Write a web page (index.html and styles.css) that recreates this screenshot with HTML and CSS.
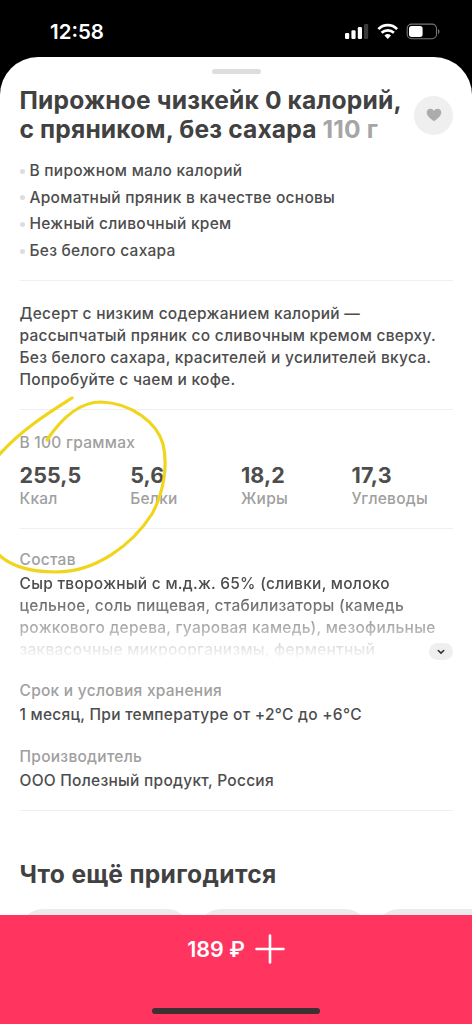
FILE: index.html
```html
<!DOCTYPE html>
<html lang="ru">
<head>
<meta charset="utf-8">
<title>Пирожное чизкейк</title>
<link rel="stylesheet" href="styles.css">
</head>
<body>
<div class="screen">
  <header class="status">
    <span class="time">12:58</span>
    <svg class="indicators" width="97" height="18" viewBox="0 0 97 18">
      <g fill="#fff">
        <rect x="1" y="10" width="4.2" height="6" rx="1.2"/>
        <rect x="7.4" y="7.2" width="4.2" height="8.8" rx="1.2"/>
        <rect x="13.8" y="4" width="4.2" height="12" rx="1.2"/>
        <rect x="20" y="1" width="4.2" height="15" rx="1.2" fill="#3a3a3a"/>
      </g>
      <g fill="none" stroke="#fff" stroke-width="2.7">
        <path d="M34.4 6.1a13.2 13.2 0 0 1 18.7 0"/>
        <path d="M37.6 9.8a8.8 8.8 0 0 1 12.3 0"/>
      </g>
      <path d="M43.75 15.9l-3.3-3.4a5 5 0 0 1 6.6 0z" fill="#fff"/>
      <rect x="63.2" y="1.1" width="29.3" height="14.6" rx="4.4" fill="none" stroke="#777" stroke-width="1.1"/>
      <rect x="65" y="2.9" width="13.6" height="11" rx="2.6" fill="#fff"/>
      <path d="M94 6v5c1.9-.7 1.9-4.3 0-5z" fill="#777"/>
    </svg>
  </header>

  <main class="sheet">
    <div class="grabber"></div>
    <div class="head">
      <h1 class="title">Пирожное чизкейк 0 калорий,<br>с пряником, без сахара <span class="weight">110 г</span></h1>
      <button class="like" aria-label="В избранное">
        <svg width="16" height="14" viewBox="0 0 16 14"><path d="M8 13.2C5.8 11.7.7 8.400.7 4.600.7 2.300 2.300.8 4.300.8 5.900.8 7.300 1.600 8 3 8.700 1.600 10.100.8 11.700.8c2 0 3.600 1.500 3.600 3.800 0 3.800-5.100 7.100-7.300 8.600z" fill="#acacac"/></svg>
      </button>
    </div>
    <ul class="features">
      <li>В пирожном мало калорий</li>
      <li>Ароматный пряник в качестве основы</li>
      <li>Нежный сливочный крем</li>
      <li>Без белого сахара</li>
    </ul>
    <p class="description">Десерт с низким содержанием калорий —<br>рассыпчатый пряник со сливочным кремом сверху.<br>Без белого сахара, красителей и усилителей вкуса.<br>Попробуйте с чаем и кофе.</p>
    <section class="nutrition">
      <div class="label">В 100 граммах</div>
      <div class="facts">
        <div><b>255,5</b><span>Ккал</span></div>
        <div><b>5,6</b><span>Белки</span></div>
        <div><b>18,2</b><span>Жиры</span></div>
        <div><b>17,3</b><span>Углеводы</span></div>
      </div>
    </section>
    <section class="details">
      <div class="label">Состав</div>
      <div class="composition">
        <p class="faded">Сыр творожный с м.д.ж. 65% (сливки, молоко<br>цельное, соль пищевая, стабилизаторы (камедь<br>рожкового дерева, гуаровая камедь), мезофильные<br>заквасочные микроорганизмы, ферментный</p>
        <button class="more" aria-label="Показать полностью"><svg width="8" height="6" viewBox="0 0 8 6"><path d="M1.300 1.500L4 4.100l2.700-2.600" fill="none" stroke="#333" stroke-width="1.600" stroke-linecap="round" stroke-linejoin="round"/></svg></button>
      </div>
      <div class="label storage">Срок и условия хранения</div>
      <p class="value">1 месяц, При температуре от +2°C до +6°C</p>
      <div class="label maker">Производитель</div>
      <p class="value">ООО Полезный продукт, Россия</p>
    </section>
    <h2 class="more-title">Что ещё пригодится</h2>
    <div class="cards"><div class="card"></div><div class="card"></div><div class="card"></div></div>
    <svg class="marker" width="180" height="190" viewBox="0 390 180 190" fill="none" stroke="#f1d51d" stroke-width="3.200" stroke-linecap="round" stroke-linejoin="round">
      <path d="M72 398C50 412 22 429-1 455"/>
      <path d="M47 440C61 419 78 402 101 402C132 403 157 423 163 444C168 465 164 492 152 514C132 545 96 572 56 572C32 572 12 567-1 555"/>
    </svg>
  </main>

  <footer class="buy">
    <div class="price"><span>189 ₽</span><svg width="30" height="30" viewBox="0 0 30 30"><path d="M15 1.500v27M1.500 15h27" stroke="#fff" stroke-width="2.600" stroke-linecap="round"/></svg></div>
    <div class="home"></div>
  </footer>
</div>
</body>
</html>
```
FILE: styles.css
```css
* { box-sizing: border-box; }
body { margin: 0; background: #000; font-family: Inter, "Liberation Sans", sans-serif; }
h1, h2, p, ul { margin: 0; padding: 0; }
button { border: 0; padding: 0; }
.screen { width: 472px; height: 1024px; display: flex; flex-direction: column; overflow: hidden; background: #000; }
.status { height: 57px; flex: none; display: flex; justify-content: space-between; align-items: flex-start; padding: 20px 31px 0 50px; color: #fff; }
.time { font-size: 20.5px; line-height: 24px; font-weight: 600; letter-spacing: 0; }
.indicators { margin-top: 3px; }
.sheet { position: relative; height: 858px; flex: none; overflow: hidden; background: #fff; border-radius: 38px 38px 0 0; padding: 12px 19px 0 19.500px; color: #4d4d4d; font-size: 15.500px; line-height: 22px; font-weight: 500; letter-spacing: .26px; white-space: nowrap; }
.grabber { width: 49px; height: 5px; margin: 0 auto; border-radius: 3px; background: #ddd; }
.head { height: 75px; display: flex; justify-content: space-between; padding-top: 12px; }
.title { font-size: 24.600px; line-height: 29px; font-weight: 700; letter-spacing: .16px; color: #414141; }
.weight { color: #a6a6a6; }
.like { width: 39px; height: 39px; margin-top: 9.500px; border-radius: 50%; background: #efefef; display: flex; align-items: center; justify-content: center; }
.features { list-style: none; height: 132px; padding: 9px 0 0; border-bottom: 1px solid #efefef; }
.features li { display: flex; align-items: center; gap: 5px; height: 26.600px; }
.features li::before { content: ""; width: 5px; height: 5px; border-radius: 50%; background: #ddd; }
.description { height: 129px; padding-top: 22px; border-bottom: 1px solid #efefef; }
.label { color: #a0a0a0; }
.nutrition { height: 119px; padding-top: 22px; border-bottom: 1px solid #efefef; }
.facts { display: grid; grid-template-columns: repeat(4, 110.700px); }
.facts div { display: flex; flex-direction: column; }
.facts b { font-size: 21.500px; line-height: 26px; font-weight: 700; letter-spacing: .1px; padding-top: 8px; }
.facts span { color: #a0a0a0; }
.details { height: 282px; padding-top: 20px; border-bottom: 1px solid #efefef; }
.composition { position: relative; margin-top: 2px; height: 88px; }
.faded { height: 88px; -webkit-mask-image: linear-gradient(#000 20%, transparent 98%); mask-image: linear-gradient(#000 20%, transparent 98%); }
.more { position: absolute; right: 0; bottom: 1px; width: 24px; height: 17px; border-radius: 9px; background: #efefef; display: flex; align-items: center; justify-content: center; }
.storage { margin-top: 19px; }
.value { margin-top: 2px; }
.maker { margin-top: 20px; }
.more-title { margin-top: 46px; font-size: 24.600px; line-height: 34px; font-weight: 700; letter-spacing: .32px; color: #414141; }
.cards { display: flex; gap: 8px; margin-top: 18px; }
.card { width: 170px; height: 170px; flex: none; border-radius: 23px; background: #ebebeb; }
.marker { position: absolute; left: 0; top: 333px; }
.buy { height: 109px; flex: none; background: #ff345f; color: #fff; display: flex; flex-direction: column; align-items: center; justify-content: space-between; padding: 19px 0 10px; }
.price { display: flex; align-items: center; gap: 10px; font-size: 21.500px; font-weight: 600; }
.home { width: 168px; height: 6px; border-radius: 3px; background: #3c3033; }
```
